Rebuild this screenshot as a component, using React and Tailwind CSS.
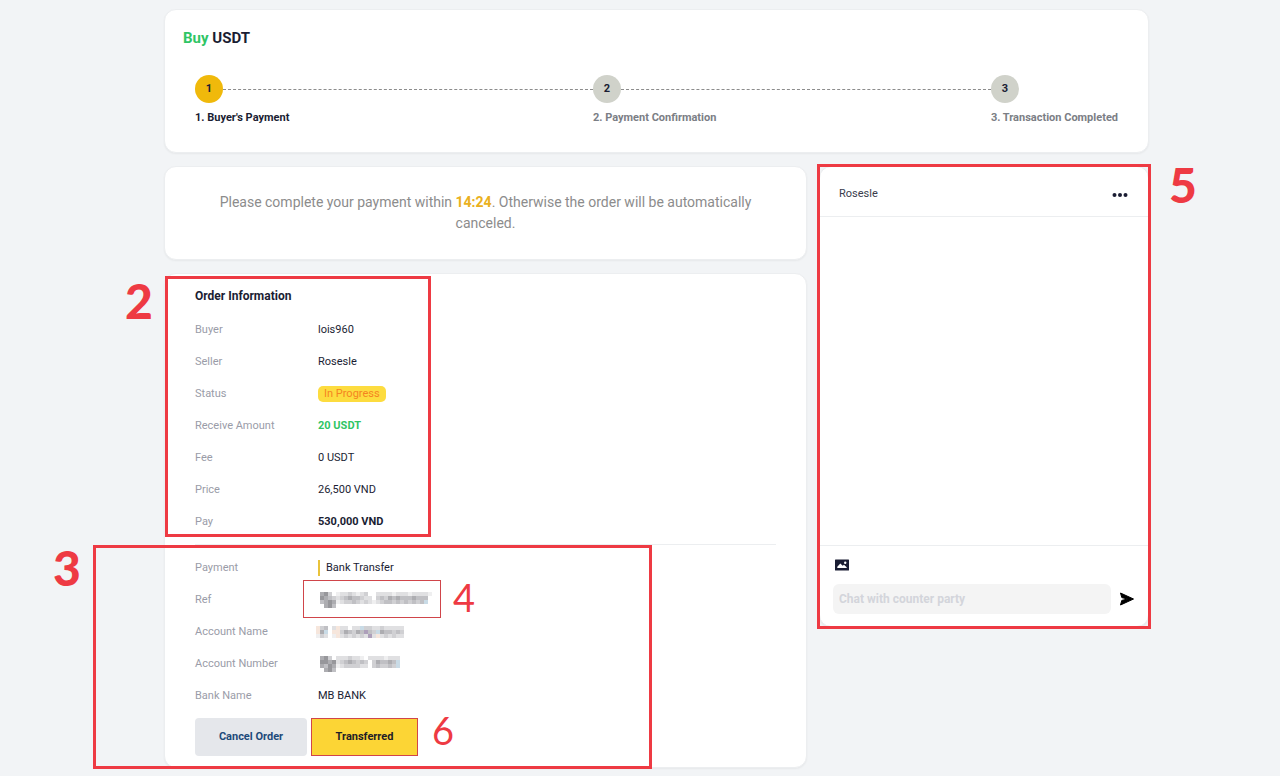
import React, { useState } from 'react';

const STEPS = [
  { id: 1, label: "1. Buyer's Payment" },
  { id: 2, label: '2. Payment Confirmation' },
  { id: 3, label: '3. Transaction Completed' },
];

const CARD = 'rounded-xl border border-[#eceef0] bg-white shadow-xs';

// One shade per 4px cell, '.' is empty
const SHADES = {
  1: '#97979b',
  2: '#adadb1',
  3: '#c0c0c4',
  4: '#d0d0d3',
  5: '#e0e0e2',
  6: '#efeff0',
  a: '#f6e6dc',
  b: '#c9dbe6',
  c: '#ad9fba',
};

const REF_MASK = [
  '214.65545654..55556555655556',
  '1234543233455.4342323332333',
  '32126544345456543343434343b',
  '.213.......................',
];
const NAME_MASK = [
  'a43.5a55.55b4455455555',
  'a2b.aa423423c34b233434',
  '645.6a5454545c5a545455',
];
const NUMBER_MASK = [
  '214.5554556.55556555',
  '112154323434.423323b',
  '231265444455.434434b',
  '.213................',
];

function Masked({ rows, label, icon }) {
  const width = Math.max(...rows.map((r) => r.length)) * 4;
  return (
    <svg
      role="img"
      aria-label={label}
      width={width}
      height={rows.length * 4}
      shapeRendering="crispEdges"
      className={icon ? 'ml-0.5' : '-ml-0.5'}
    >
      {rows.map((row, y) =>
        row.split('').map((c, x) =>
          SHADES[c] ? <rect key={`${x}-${y}`} x={x * 4} y={y * 4} width="4" height="4" fill={SHADES[c]} /> : null
        )
      )}
    </svg>
  );
}

function Row({ label, children, className = 'text-[#1a1d33]' }) {
  return (
    <div className="flex h-4 items-center text-[11px]">
      <dt className="w-[123px] shrink-0 text-[#9a9ca8]">{label}</dt>
      <dd className={`flex items-center ${className}`}>{children}</dd>
    </div>
  );
}

// Numbered callout frame
function Frame({ className }) {
  return <div aria-hidden="true" className={`pointer-events-none absolute ${className}`} />;
}

function Callout({ className, children }) {
  return (
    <span className={`pointer-events-none absolute font-[Lato,sans-serif] text-[#ee3a43] ${className}`}>
      {children}
    </span>
  );
}

function Stepper() {
  return (
    <section className={`${CARD} px-[18px] pt-4 pb-[26px]`}>
      <h1 className="text-[15px] leading-6 font-bold text-[#1a1d33]">
        <span className="text-[#2fc565]">Buy</span> USDT
      </h1>
      <ol className="mt-[25px] flex px-3">
        {STEPS.map((step, i) => (
          <li key={step.id} className={i < 2 ? 'flex-1' : ''}>
            <div className="flex items-center">
              <span
                className={`flex size-7 items-center justify-center rounded-full text-[11px] font-bold text-[#1a1d33] ${
                  i === 0 ? 'bg-[#f0b90b]' : 'bg-[#d0d2ca]'
                }`}
              >
                {step.id}
              </span>
              {i < 2 && <span className="flex-1 border-t border-dashed border-[#8c8c8c]" />}
            </div>
            <p className={`mt-[7px] text-[11px] leading-4 font-bold ${i === 0 ? 'text-[#1a1d33]' : 'text-[#7b7e85]'}`}>
              {step.label}
            </p>
          </li>
        ))}
      </ol>
    </section>
  );
}

function OrderCard() {
  return (
    <section className={`${CARD} px-[30px] pt-3 pb-[11px]`}>
      <div className="relative">
        <h2 className="text-xs leading-5 font-bold text-[#1a1d33]">Order Information</h2>
        <dl className="mt-4 flex flex-col gap-4 pb-[14px]">
          <Row label="Buyer">lois960</Row>
          <Row label="Seller">Rosesle</Row>
          <Row label="Status">
            <span className="rounded-[5px] bg-[#fddc3f] px-1.5 leading-4 text-[#f5841f]">In Progress</span>
          </Row>
          <Row label="Receive Amount" className="font-bold text-[#2fc565]">20 USDT</Row>
          <Row label="Fee">0 USDT</Row>
          <Row label="Price">26,500 VND</Row>
          <Row label="Pay" className="font-bold text-[#1a1d33]">530,000 VND</Row>
        </dl>
        <Frame className="-top-[10px] -left-[30px] h-[261px] w-[266px] border-3 border-[#ee3a43]" />
        <Callout className="-top-[17px] -left-[70px] text-5xl leading-[64px] font-black">2</Callout>
      </div>

      <div className="relative border-t border-[#eceef0] pt-[15px]">
        <dl className="flex flex-col gap-4">
          <Row label="Payment">
            <span className="border-l-2 border-[#e9c33b] pl-1.5 leading-4">Bank Transfer</span>
          </Row>
          <Row label="Ref"><Masked rows={REF_MASK} label="Hidden reference" icon /></Row>
          <Row label="Account Name"><Masked rows={NAME_MASK} label="Hidden account name" /></Row>
          <Row label="Account Number"><Masked rows={NUMBER_MASK} label="Hidden account number" icon /></Row>
          <Row label="Bank Name">MB BANK</Row>
        </dl>
        <div className="mt-[14px] flex gap-1">
          <button type="button" className="h-[38px] w-28 rounded bg-[#e5e7eb] text-[11px] font-bold text-[#1d4a7a]">
            Cancel Order
          </button>
          <div className="relative">
            <button type="button" className="h-[38px] w-[107px] rounded bg-[#fcd535] text-[11px] font-bold text-[#1f2026]">
              Transferred
            </button>
            <Frame className="inset-0 border border-[#d0454a]" />
            <Callout className="-top-[14px] left-[121px] text-[38px] leading-[52px]">6</Callout>
          </div>
        </div>
        <Frame className="top-0 -left-[102px] h-[224px] w-[559px] border-3 border-[#ee3a43]" />
        <Callout className="-top-[9px] -left-[142px] text-5xl leading-[64px] font-black">3</Callout>
        <Frame className="top-[35px] left-[108px] h-[38px] w-[138px] border border-[#d0454a]" />
        <Callout className="top-[26px] left-[258px] text-[38px] leading-[52px]">4</Callout>
      </div>
    </section>
  );
}

function Chat() {
  const [message, setMessage] = useState('');

  return (
    <aside className={`relative flex h-[461px] w-[330px] shrink-0 flex-col ${CARD}`}>
      <header className="flex h-[50px] items-center justify-between border-b border-[#eceef0] pt-1.5 pr-5 pl-[19px]">
        <span className="text-[11px] text-[#3a3c4c]">Rosesle</span>
        <button type="button" aria-label="More options">
          <svg width="16" height="6" viewBox="0 0 16 6" fill="#1a1d33">
            <circle cx="2.5" cy="3" r="2" />
            <circle cx="8" cy="3" r="2" />
            <circle cx="13.5" cy="3" r="2" />
          </svg>
        </button>
      </header>
      <div className="flex-1" />
      <form className="border-t border-[#eceef0] pt-3 pr-[11px] pb-3 pl-[13px]" onSubmit={(e) => e.preventDefault()}>
        <button type="button" aria-label="Attach image" className="ml-0.5 block">
          <svg width="14" height="14" viewBox="0 0 14 14">
            <rect y="1.5" width="14" height="11" rx="0.5" fill="#1a1d33" />
            <path d="M2.3 10V8.8L5.3 5.4l2.4 2.3L9 6.8l2.7 2.5v.7z" fill="#fff" />
            <circle cx="10.2" cy="4.8" r="1.2" fill="#fff" />
          </svg>
        </button>
        <div className="mt-3 flex items-center gap-2">
          <input
            type="text"
            aria-label="Chat message"
            placeholder="Chat with counter party"
            value={message}
            onChange={(e) => setMessage(e.target.value)}
            className="h-[30px] min-w-0 flex-1 rounded-md bg-[#f4f4f4] px-1.5 text-xs font-bold placeholder:text-[#d3d5db]"
          />
          <button type="submit" aria-label="Send" className="mr-0.5">
            <svg width="16" height="14" viewBox="0 0 16 14">
              <path d="M1.5 1L14.5 7L1.5 13L2.8 8.4L8.5 7L2.8 5.6z" fill="#000" stroke="#000" strokeLinejoin="round" />
            </svg>
          </button>
        </div>
      </form>
      <Frame className="-top-[3px] -right-[3px] -bottom-[3px] -left-[3px] border-3 border-[#ee3a43]" />
      <Callout className="-top-[14px] left-[349px] text-5xl leading-[64px] font-black">5</Callout>
    </aside>
  );
}

export default function App() {
  return (
    <main className="flex min-h-screen flex-col gap-[13px] overflow-hidden bg-[#f2f4f6] pt-[9px] pr-[131px] pb-2 pl-[164px] font-[Roboto,sans-serif]">
      <Stepper />
      <div className="flex items-start gap-3">
        <div className="flex min-w-0 flex-1 flex-col gap-[13px]">
          <section className={`${CARD} px-12 py-[25px] text-center text-sm leading-[21px] text-[#8c8c8c]`}>
            <p>
              Please complete your payment within <strong className="text-[#eab020]">14:24</strong>. Otherwise the
              order will be automatically canceled.
            </p>
          </section>
          <OrderCard />
        </div>
        <Chat />
      </div>
    </main>
  );
}
